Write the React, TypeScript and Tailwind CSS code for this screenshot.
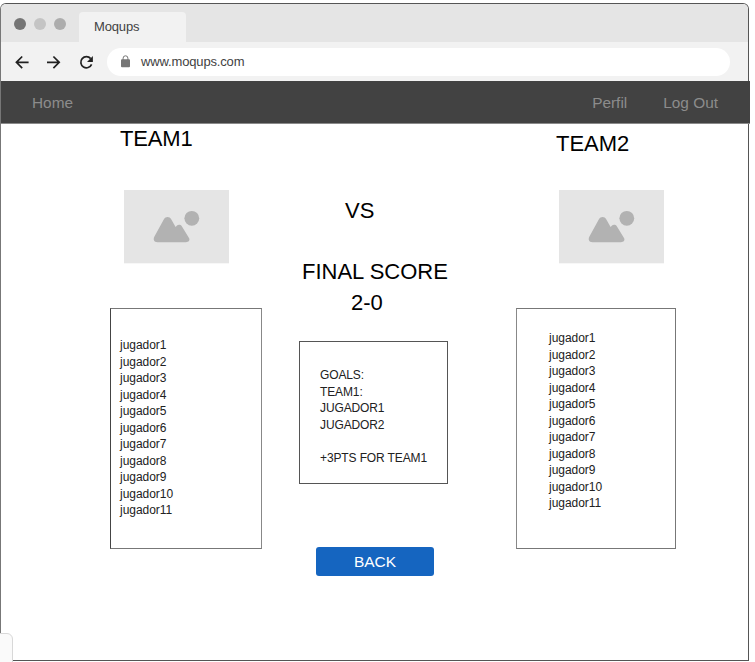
import React from "react";

const players = Array.from({ length: 11 }, (_, i) => `jugador${i + 1}`);

function ImagePlaceholder() {
  return (
    <svg className="block h-[74px] w-[105px]" viewBox="0 0 105 74">
      <rect width="105" height="73.3" fill="#e5e5e5" />
      <circle cx="67.8" cy="28.3" r="7.4" fill="#b2b2b2" />
      <path
        d="M39.9 29.2C41.6 26.4 45.6 26.4 47.2 29.2L51.6 37L53 35.5C54.3 34.4 56.6 34.5 57.8 36.2L65 48C66.3 50.3 64.5 52.2 62 52.2H33.4C30 52.2 29 49.8 30.3 46.8Z"
        fill="#b2b2b2"
      />
    </svg>
  );
}

function PlayerList() {
  return (
    <ul className="text-[12px] leading-[16.5px] tracking-[-0.04px] text-[#212121]">
      {players.map((p) => (
        <li key={p}>{p}</li>
      ))}
    </ul>
  );
}

function BrowserChrome() {
  return (
    <>
      <div className="flex h-[38px] rounded-t-[5px] bg-[#e5e5e5]">
        <div className="flex w-[78px] gap-2 pt-[14px] pl-[13px]">
          <span className="size-3 rounded-full bg-[#757575]" />
          <span className="size-3 rounded-full bg-[#c4c4c4]" />
          <span className="size-3 rounded-full bg-[#adadad]" />
        </div>
        <div className="mt-2 w-[107px] rounded-t-[4px] bg-[#f2f2f2] pl-[15px] text-[13px] leading-[29px] tracking-[-0.15px] text-[#424242]">
          Moqups
        </div>
      </div>
      <div className="flex h-[39px] items-center bg-[#f2f2f2] pl-[14px]">
        <svg
          className="h-[18px] w-[80px]"
          viewBox="0 0 80 18"
          fill="none"
          stroke="#212121"
          strokeWidth="1.7"
        >
          <path d="M13.6 9.3H1.6M7.2 3.5L1.4 9.3L7.2 15.1" />
          <path d="M32 9.3H44M38.4 3.5L44.2 9.3L38.4 15.1" />
          <path d="M76.6 11.4A5.6 5.6 0 1 1 75.7 5.6" />
          <path d="M77.9 3V8.9H72Z" fill="#212121" stroke="none" />
        </svg>
        <div className="ml-[12px] flex h-7 w-[623px] items-center rounded-full bg-white pl-[14px]">
          <svg className="h-[13px] w-[9px]" viewBox="0 0 9 13">
            <rect y="4.3" width="9" height="8" rx="1" fill="#757575" />
            <path
              d="M2.1 5V3.2a2.4 2.4 0 0 1 4.8 0V5"
              fill="none"
              stroke="#757575"
              strokeWidth="1"
            />
          </svg>
          <span className="ml-[11px] text-[13px] tracking-[-0.15px] text-[#424242]">
            www.moqups.com
          </span>
        </div>
      </div>
    </>
  );
}

export default function App() {
  return (
    <div className="relative h-[662px] w-[755px] overflow-hidden bg-white pt-[3px] font-['Liberation_Sans',Arial,sans-serif]">
      <div className="h-[658px] w-[749px] rounded-t-[6px] border border-[#555] border-l-[#777]">
        <BrowserChrome />
        <nav className="flex h-[43px] w-[749px] items-center border-b border-[#8a8a8a] bg-[#424242] pt-px pl-[31px] text-[15.4px] text-[#8c8c8c]">
          <span>Home</span>
          <span className="ml-auto">Perfil</span>
          <span className="mr-[32px] ml-[36px]">Log Out</span>
        </nav>
        <main className="flex pl-[109px] text-[22px] leading-[26px] text-black">
          <section className="w-[189px]">
            <h2 className="h-[66px] pt-[2px] pl-[10px] tracking-[-0.15px]">TEAM1</h2>
            <div className="pl-[14px]">
              <ImagePlaceholder />
            </div>
            <div className="mt-[44px] h-[241px] w-[152px] border border-[#444] border-t-[#777] border-r-[#888] border-b-[#777] pt-[28px] pl-[9px]">
              <PlayerList />
            </div>
          </section>
          <section className="w-[217px]">
            <p className="mt-[74px] h-[61px] pl-[46px]">VS</p>
            <p className="h-[31px] pl-[3px]">FINAL SCORE</p>
            <p className="pl-[52px]">2-0</p>
            <div className="mt-[25px] h-[143px] w-[149px] border border-[#555] pt-[25px] pl-[20px] text-[12px] leading-[16.5px] tracking-[-0.12px] whitespace-nowrap text-[#212121]">
              <p>GOALS:</p>
              <p>TEAM1:</p>
              <p>JUGADOR1</p>
              <p>JUGADOR2</p>
              <p className="mt-[16.5px]">+3PTS FOR TEAM1</p>
            </div>
            <button className="mt-[63px] ml-[17px] block h-[29px] w-[118px] rounded-[3px] bg-[#1565c0] text-[15.5px] leading-[27px] text-white">
              BACK
            </button>
          </section>
          <section>
            <h2 className="h-[66px] pt-[7px] pl-[40px]">TEAM2</h2>
            <div className="pl-[43px]">
              <ImagePlaceholder />
            </div>
            <div className="mt-[44px] h-[241px] w-[160px] border border-[#777] border-l-[#888] pt-[21px] pl-[32px]">
              <PlayerList />
            </div>
          </section>
        </main>
      </div>
      <div className="absolute bottom-[-1px] left-[-1px] h-[30px] w-[14px] rounded-tr-[6px] border border-[#d8d8d8] bg-[#fafafa]" />
    </div>
  );
}
